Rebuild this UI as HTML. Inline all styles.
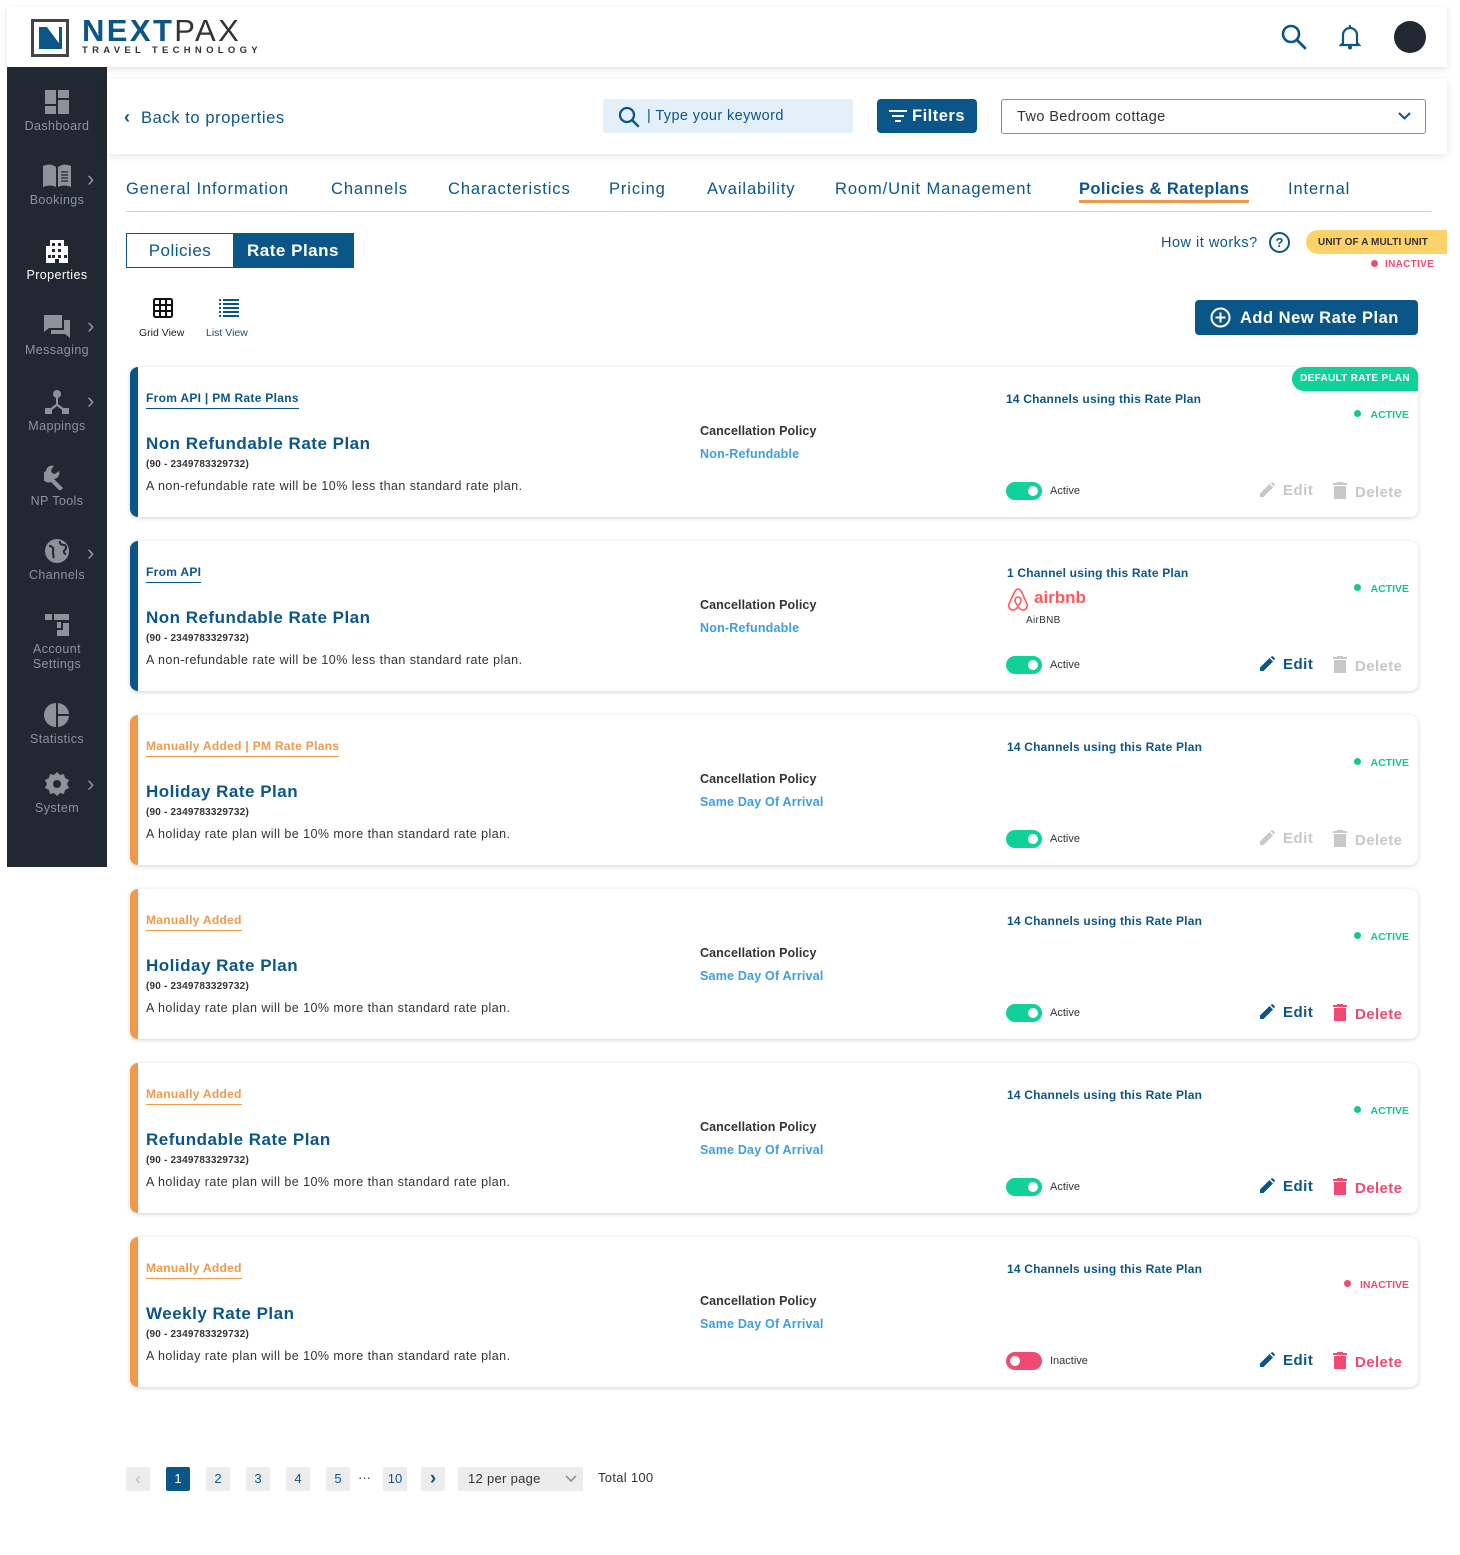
<!DOCTYPE html>
<html><head><meta charset="utf-8"><style>
*{box-sizing:border-box;margin:0;padding:0}
body{width:1460px;height:1555px;background:#fff;font-family:"Liberation Sans",sans-serif;color:#222;position:relative;overflow:hidden}
.abs{position:absolute}
.blue{color:#0b5689}
.hdr{left:7px;top:7px;width:1440px;height:60px;background:#fff;box-shadow:0 2px 6px rgba(0,0,0,.12)}
.side{left:7px;top:67px;width:100px;height:800px;background:#222831}
.si{position:absolute;left:0;width:100px;text-align:center;color:#8c939b;font-size:12.5px;letter-spacing:.4px}
.si svg{display:block;margin:0 auto 4px}
.chev{position:absolute;left:80px;color:#8c939b;font-size:22px;line-height:22px}
.sub{left:107px;top:79px;width:1340px;height:75px;background:#fff;box-shadow:0 2px 8px rgba(0,0,0,.1)}
.tab{position:absolute;top:180px;font-size:16.5px;color:#0b5689;letter-spacing:.9px}
.card{position:absolute;left:130px;width:1288px;height:150px;background:#fff;border-radius:8px;box-shadow:0 1px 4px rgba(0,0,0,.18);border-left:8px solid #0b5689}
.card.o{border-left-color:#f0994a}
.lbl{position:absolute;left:8px;top:24px;font-size:12px;font-weight:bold;color:#0b5689;padding-bottom:3px;border-bottom:1.5px solid #0b5689;letter-spacing:.3px}
.o .lbl{color:#f0994a;border-bottom-color:#f0994a}
.ttl{position:absolute;left:8px;top:67px;font-size:17px;font-weight:bold;color:#0b5689;letter-spacing:.5px}
.code{position:absolute;left:8px;top:92px;font-size:10px;font-weight:bold;color:#333;letter-spacing:.2px}
.desc{position:absolute;left:8px;top:112px;font-size:12.5px;color:#333;letter-spacing:.45px}
.cp{position:absolute;left:562px;top:57px;font-size:12.5px;font-weight:bold;color:#333;letter-spacing:.1px}
.cpv{position:absolute;left:562px;top:80px;font-size:12.5px;font-weight:bold;color:#3c9ee0;letter-spacing:.2px}
.ch{position:absolute;left:868px;top:25px;font-size:12px;font-weight:bold;color:#0b5689;letter-spacing:.2px}
.st{position:absolute;right:9px;top:42px;font-size:10.5px;font-weight:bold;color:#11c98f}
.st:before{content:"";display:inline-block;width:7px;height:7px;border-radius:50%;background:currentColor;margin-right:9px;vertical-align:1px}
.st.in{color:#ef4b72}
.tg{position:absolute;left:868px;top:115px;width:36px;height:18px;border-radius:9px;background:#11d19a}
.tg:after{content:"";position:absolute;right:4px;top:4px;width:10px;height:10px;border-radius:50%;background:#fff}
.tg.in{background:#ef4b72}.tg.in:after{right:auto;left:4px}
.tl{position:absolute;left:912px;top:118px;font-size:11px;color:#333}
.ed{position:absolute;left:1122px;top:115px;font-size:15px;font-weight:bold;color:#0b5689;letter-spacing:.5px}
.dl{position:absolute;left:1195px;top:115px;font-size:15px;font-weight:bold;color:#ef4b72;letter-spacing:.4px}
.dis{color:#c8c8c8!important}
.ed svg,.dl svg{vertical-align:-2px;margin-right:8px}
.pg{position:absolute;top:1467px;width:24px;height:24px;background:#ececec;border-radius:2px;text-align:center;line-height:24px;font-size:13px;color:#0b5689}
</style></head><body>

<div class="abs hdr">
  <svg class="abs" style="left:24px;top:12px" width="38" height="38" viewBox="0 0 38 38"><rect x="1.5" y="1.5" width="35" height="35" fill="#fff" stroke="#444" stroke-width="3"/><path d="M8 8h8l12 16V8h3v22h-7L12 14v16H8z" fill="#0b5689"/><path d="M16 8h12v16z" fill="#fff"/><path d="M8 30V8l20 22z" fill="#0b5689"/></svg>
  <div class="abs" style="left:75px;top:8px;font-size:31px;font-weight:bold;color:#0b5689;letter-spacing:2.4px;line-height:32px">NEXT<span style="font-weight:normal;color:#333">PAX</span></div>
  <div class="abs" style="left:75px;top:38px;font-size:9.5px;font-weight:bold;color:#333;letter-spacing:4.3px">TRAVEL TECHNOLOGY</div>
  <svg class="abs" style="left:1274px;top:17px" width="26" height="26" viewBox="0 0 26 26"><circle cx="10" cy="10" r="8" fill="none" stroke="#0b5689" stroke-width="2.6"/><path d="M16 16l8 8" stroke="#0b5689" stroke-width="2.8" stroke-linecap="round"/></svg>
  <svg class="abs" style="left:1332px;top:17px" width="22" height="26" viewBox="0 0 22 26"><path d="M4 19V11a7 7 0 0 1 14 0v8l2 2H2z" fill="none" stroke="#0b5689" stroke-width="2.2"/><circle cx="11" cy="23.5" r="2" fill="#0b5689"/><rect x="10" y="1" width="2" height="4" fill="#0b5689"/></svg>
  <div class="abs" style="left:1387px;top:14px;width:32px;height:32px;border-radius:50%;background:#222831"></div>
</div>

<div class="abs side">
  <div class="si" style="top:22px"><svg width="26" height="26" viewBox="0 0 26 26" fill="#8c939b"><rect x="1" y="1" width="11" height="14"/><rect x="14" y="1" width="11" height="8"/><rect x="1" y="17" width="11" height="8"/><rect x="14" y="11" width="11" height="14"/></svg>Dashboard</div>
  <div class="si" style="top:96px"><svg width="30" height="26" viewBox="0 0 30 26" fill="#8c939b"><path d="M1 3c5-2 9-2 13 1v20c-4-2-8-2-13 0z"/><path d="M16 4c4-3 8-3 13-1v21c-5-2-9-2-13 0z"/><path d="M19 9h7M19 12h7M19 15h7M19 18h7" stroke="#222831" stroke-width="1.2"/></svg>Bookings</div><div class="chev" style="top:101px">›</div>
  <div class="si" style="top:171px;color:#fff"><svg width="26" height="26" viewBox="0 0 26 26" fill="#fff"><path d="M6 2h14v6h4v17H2V8h4z"/><g fill="#222831"><rect x="8" y="5" width="3" height="3"/><rect x="14" y="5" width="3" height="3"/><rect x="8" y="11" width="3" height="3"/><rect x="14" y="11" width="3" height="3"/><rect x="4" y="17" width="3" height="3"/><rect x="20" y="17" width="3" height="3"/><rect x="8" y="17" width="3" height="3"/><rect x="14" y="17" width="3" height="3"/><rect x="11" y="21" width="4" height="4"/></g></svg>Properties</div>
  <div class="si" style="top:246px"><svg width="28" height="26" viewBox="0 0 28 26" fill="#8c939b"><path d="M1 2h18v13H6l-5 4z"/><path d="M21 7h6v18l-5-4H8v-4h13z"/></svg>Messaging</div><div class="chev" style="top:248px">›</div>
  <div class="si" style="top:322px"><svg width="26" height="26" viewBox="0 0 26 26" fill="#8c939b"><circle cx="13" cy="5" r="4"/><path d="M12 8h2v7l8 6-1.5 2L13 17l-7.5 6L4 21l8-6z"/><rect x="1" y="19" width="7" height="6"/><rect x="18" y="19" width="7" height="6"/></svg>Mappings</div><div class="chev" style="top:323px">›</div>
  <div class="si" style="top:397px"><svg width="26" height="26" viewBox="0 0 26 26" fill="#8c939b"><path d="M2 7a6 6 0 0 1 8-5l-3 4 1 3 3 1 4-3a6 6 0 0 1-5 8l9 9-3 3-9-9a6 6 0 0 1-5-11z"/></svg>NP Tools</div>
  <div class="si" style="top:471px"><svg width="26" height="26" viewBox="0 0 26 26"><circle cx="13" cy="13" r="12" fill="#8c939b"/><path d="M5 8c3 0 5 2 4 5s2 4 0 7M16 3c-1 3 2 4 4 4s3 3 1 5c-2 1-1 4 1 4" stroke="#222831" stroke-width="2" fill="none"/></svg>Channels</div><div class="chev" style="top:475px">›</div>
  <div class="si" style="top:545px;line-height:15px"><svg width="26" height="26" viewBox="0 0 26 26" fill="#8c939b"><rect x="1" y="2" width="7" height="6"/><rect x="10" y="2" width="15" height="6"/><rect x="13" y="10" width="4" height="6"/><rect x="19" y="11" width="6" height="13"/><rect x="13" y="18" width="6" height="6"/></svg>Account<br>Settings</div>
  <div class="si" style="top:635px"><svg width="26" height="26" viewBox="0 0 26 26" fill="#8c939b"><path d="M12 1a12 12 0 0 0 0 24z"/><path d="M14 1a12 12 0 0 1 11 11H14z"/><path d="M14 14h11a12 12 0 0 1-11 11z"/></svg>Statistics</div>
  <div class="si" style="top:704px"><svg width="26" height="26" viewBox="0 0 26 26"><path d="M13 1l3 3 4-1 1 4 4 2-2 4 2 4-4 2-1 4-4-1-3 3-3-3-4 1-1-4-4-2 2-4-2-4 4-2 1-4 4 1z" fill="#8c939b"/><circle cx="13" cy="13" r="4" fill="#222831"/></svg>System</div><div class="chev" style="top:706px">›</div>
</div>

<div class="abs sub">
  <div class="abs blue" style="left:17px;top:28px;font-size:16.5px;letter-spacing:.6px"><b style="font-size:18px">‹</b>&nbsp; Back to properties</div>
  <div class="abs" style="left:496px;top:20px;width:250px;height:34px;background:#e3eff9;border-radius:3px">
    <svg class="abs" style="left:15px;top:7px" width="22" height="22" viewBox="0 0 22 22"><circle cx="9" cy="9" r="7" fill="none" stroke="#0b5689" stroke-width="2.3"/><path d="M14 14l6 6" stroke="#0b5689" stroke-width="2.5" stroke-linecap="round"/></svg>
    <div class="abs blue" style="left:44px;top:9px;font-size:14.5px;letter-spacing:.4px">| Type your keyword</div>
  </div>
  <div class="abs" style="left:770px;top:20px;width:100px;height:34px;background:#0b5689;border-radius:4px;color:#fff;font-size:16.5px;font-weight:bold;line-height:35px;padding-left:35px;letter-spacing:.5px">Filters
    <svg class="abs" style="left:12px;top:11px" width="18" height="13" viewBox="0 0 18 13" fill="#fff"><rect width="18" height="2"/><rect x="3" y="5" width="12" height="2"/><rect x="6" y="10" width="6" height="2"/></svg></div>
  <div class="abs" style="left:894px;top:20px;width:425px;height:35px;border:1px solid #868e96;border-radius:3px;font-size:14.5px;color:#333;line-height:35px;padding-left:15px;letter-spacing:.4px">Two Bedroom cottage
    <svg class="abs" style="right:14px;top:12px" width="13" height="9" viewBox="0 0 13 9"><path d="M1 1l5.5 5.5L12 1" fill="none" stroke="#0b5689" stroke-width="2"/></svg></div>
</div>

<div class="tab" style="left:126px">General Information</div>
<div class="tab" style="left:331px">Channels</div>
<div class="tab" style="left:448px">Characteristics</div>
<div class="tab" style="left:609px">Pricing</div>
<div class="tab" style="left:707px">Availability</div>
<div class="tab" style="left:835px">Room/Unit Management</div>
<div class="tab" style="left:1079px;font-weight:bold;border-bottom:3px solid #f0994a;padding-bottom:1px;letter-spacing:.4px">Policies &amp; Rateplans</div>
<div class="tab" style="left:1288px">Internal</div>
<div class="abs" style="left:126px;top:211px;width:1305px;height:1px;background:#cfcfcf"></div>

<div class="abs" style="left:126px;top:233px;width:228px;height:35px;border:1.5px solid #0b5689;display:flex">
  <div style="width:106px;text-align:center;line-height:33px;font-size:17px;color:#0b5689;letter-spacing:.5px">Policies</div>
  <div style="flex:1;background:#0b5689;color:#fff;text-align:center;line-height:33px;font-size:17px;font-weight:bold;letter-spacing:.5px">Rate Plans</div>
</div>
<div class="abs blue" style="left:1161px;top:235px;font-size:14.5px;letter-spacing:.5px">How it works?</div>
<div class="abs" style="left:1269px;top:232px;width:21px;height:21px;border:2px solid #0b5689;border-radius:50%;text-align:center;font-size:13px;font-weight:bold;line-height:17px;color:#0b5689">?</div>
<div class="abs" style="left:1306px;top:230px;width:141px;height:24px;background:#fdd26b;border-radius:12px 0 0 12px;font-size:10px;font-weight:bold;color:#333;line-height:25px;padding-left:12px;letter-spacing:.1px">UNIT OF A MULTI UNIT</div>
<div class="abs" style="left:1371px;top:259px;font-size:10px;font-weight:bold;color:#ef4b72;letter-spacing:.3px"><span style="display:inline-block;width:7px;height:7px;border-radius:50%;background:#ef4b72;margin-right:7px"></span>INACTIVE</div>

<svg class="abs" style="left:153px;top:298px" width="20" height="20" viewBox="0 0 20 20"><rect x="1" y="1" width="18" height="18" rx="1.5" fill="none" stroke="#111" stroke-width="2"/><path d="M7 1v18M13 1v18M1 7h18M1 13h18" stroke="#111" stroke-width="2"/></svg>
<div class="abs" style="left:139px;top:327px;font-size:10.5px;color:#222">Grid View</div>
<svg class="abs" style="left:219px;top:298px" width="20" height="20" viewBox="0 0 20 20" fill="#0b5689"><rect x="0" y="1" width="2" height="2"/><rect x="4" y="1" width="16" height="2"/><rect x="0" y="5" width="2" height="2"/><rect x="4" y="5" width="16" height="2"/><rect x="0" y="9" width="2" height="2"/><rect x="4" y="9" width="16" height="2"/><rect x="0" y="13" width="2" height="2"/><rect x="4" y="13" width="16" height="2"/><rect x="0" y="17" width="2" height="2"/><rect x="4" y="17" width="16" height="2"/></svg>
<div class="abs blue" style="left:206px;top:327px;font-size:10.5px">List View</div>
<div class="abs" style="left:1195px;top:300px;width:223px;height:35px;background:#0b5689;border-radius:4px;color:#fff;font-size:16.5px;font-weight:bold;line-height:36px;padding-left:45px;letter-spacing:.5px">Add New Rate Plan
  <svg class="abs" style="left:15px;top:7px" width="21" height="21" viewBox="0 0 21 21"><circle cx="10.5" cy="10.5" r="9" fill="none" stroke="#fff" stroke-width="2"/><path d="M10.5 5.5v10M5.5 10.5h10" stroke="#fff" stroke-width="2"/></svg></div>

<!-- cards -->
<div class="card" style="top:367px">
  <div class="abs" style="right:0;top:0;width:126px;height:24px;background:#11d19a;border-radius:12px 8px 0 12px;color:#fff;font-size:10px;font-weight:bold;line-height:24px;text-align:center;letter-spacing:.3px">DEFAULT RATE PLAN</div>
  <div class="lbl">From API | PM Rate Plans</div><div class="ttl">Non Refundable Rate Plan</div><div class="code">(90 - 2349783329732)</div><div class="desc">A non-refundable rate will be 10% less than standard rate plan.</div>
  <div class="cp">Cancellation Policy</div><div class="cpv">Non-Refundable</div>
  <div class="ch">14 Channels using this Rate Plan</div><div class="st">ACTIVE</div>
  <div class="tg"></div><div class="tl">Active</div>
  <div class="ed dis"><svg width="15" height="15" viewBox="0 0 15 15" fill="#c8c8c8"><path d="M0 15v-3.5L9.5 2 13 5.5 3.5 15zM10.5 1l2-1L15 2.5l-1 2z"/></svg>Edit</div>
  <div class="dl dis"><svg width="14" height="17" viewBox="0 0 14 17" fill="#c8c8c8"><rect x="0" y="1" width="14" height="2"/><rect x="4" y="0" width="6" height="2"/><path d="M1 4h12v13H1z"/></svg>Delete</div>
</div>

<div class="card" style="top:541px">
  <div class="lbl">From API</div><div class="ttl">Non Refundable Rate Plan</div><div class="code">(90 - 2349783329732)</div><div class="desc">A non-refundable rate will be 10% less than standard rate plan.</div>
  <div class="cp">Cancellation Policy</div><div class="cpv">Non-Refundable</div>
  <div class="ch" style="left:869px">1 Channel using this Rate Plan</div>
  <svg class="abs" style="left:869px;top:46px" width="22" height="24" viewBox="0 0 22 24"><path d="M11 2C9 2 8 4 6 8L2 17c-1 3 1 6 4 6 2 0 3-1 5-3 2 2 3 3 5 3 3 0 5-3 4-6l-4-9c-2-4-3-6-5-6zM11 19c-2-2-3-4-3-6a3 3 0 0 1 6 0c0 2-1 4-3 6z" fill="none" stroke="#ff5a5f" stroke-width="1.6"/></svg>
  <div class="abs" style="left:896px;top:47px;font-size:17px;font-weight:bold;color:#ff5a5f">airbnb</div>
  <div class="abs" style="left:888px;top:74px;font-size:10px;color:#333;letter-spacing:.3px">AirBNB</div>
  <div class="st">ACTIVE</div>
  <div class="tg"></div><div class="tl">Active</div>
  <div class="ed"><svg width="15" height="15" viewBox="0 0 15 15" fill="#0b5689"><path d="M0 15v-3.5L9.5 2 13 5.5 3.5 15zM10.5 1l2-1L15 2.5l-1 2z"/></svg>Edit</div>
  <div class="dl dis"><svg width="14" height="17" viewBox="0 0 14 17" fill="#c8c8c8"><rect x="0" y="1" width="14" height="2"/><rect x="4" y="0" width="6" height="2"/><path d="M1 4h12v13H1z"/></svg>Delete</div>
</div>

<div class="card o" style="top:715px">
  <div class="lbl">Manually Added | PM Rate Plans</div><div class="ttl">Holiday Rate Plan</div><div class="code">(90 - 2349783329732)</div><div class="desc">A holiday rate plan will be 10% more than standard rate plan.</div>
  <div class="cp">Cancellation Policy</div><div class="cpv">Same Day Of Arrival</div>
  <div class="ch" style="left:869px">14 Channels using this Rate Plan</div><div class="st">ACTIVE</div>
  <div class="tg"></div><div class="tl">Active</div>
  <div class="ed dis"><svg width="15" height="15" viewBox="0 0 15 15" fill="#c8c8c8"><path d="M0 15v-3.5L9.5 2 13 5.5 3.5 15zM10.5 1l2-1L15 2.5l-1 2z"/></svg>Edit</div>
  <div class="dl dis"><svg width="14" height="17" viewBox="0 0 14 17" fill="#c8c8c8"><rect x="0" y="1" width="14" height="2"/><rect x="4" y="0" width="6" height="2"/><path d="M1 4h12v13H1z"/></svg>Delete</div>
</div>

<div class="card o" style="top:889px">
  <div class="lbl">Manually Added</div><div class="ttl">Holiday Rate Plan</div><div class="code">(90 - 2349783329732)</div><div class="desc">A holiday rate plan will be 10% more than standard rate plan.</div>
  <div class="cp">Cancellation Policy</div><div class="cpv">Same Day Of Arrival</div>
  <div class="ch" style="left:869px">14 Channels using this Rate Plan</div><div class="st">ACTIVE</div>
  <div class="tg"></div><div class="tl">Active</div>
  <div class="ed"><svg width="15" height="15" viewBox="0 0 15 15" fill="#0b5689"><path d="M0 15v-3.5L9.5 2 13 5.5 3.5 15zM10.5 1l2-1L15 2.5l-1 2z"/></svg>Edit</div>
  <div class="dl"><svg width="14" height="17" viewBox="0 0 14 17" fill="#ef4b72"><rect x="0" y="1" width="14" height="2"/><rect x="4" y="0" width="6" height="2"/><path d="M1 4h12v13H1z"/></svg>Delete</div>
</div>

<div class="card o" style="top:1063px">
  <div class="lbl">Manually Added</div><div class="ttl">Refundable Rate Plan</div><div class="code">(90 - 2349783329732)</div><div class="desc">A holiday rate plan will be 10% more than standard rate plan.</div>
  <div class="cp">Cancellation Policy</div><div class="cpv">Same Day Of Arrival</div>
  <div class="ch" style="left:869px">14 Channels using this Rate Plan</div><div class="st">ACTIVE</div>
  <div class="tg"></div><div class="tl">Active</div>
  <div class="ed"><svg width="15" height="15" viewBox="0 0 15 15" fill="#0b5689"><path d="M0 15v-3.5L9.5 2 13 5.5 3.5 15zM10.5 1l2-1L15 2.5l-1 2z"/></svg>Edit</div>
  <div class="dl"><svg width="14" height="17" viewBox="0 0 14 17" fill="#ef4b72"><rect x="0" y="1" width="14" height="2"/><rect x="4" y="0" width="6" height="2"/><path d="M1 4h12v13H1z"/></svg>Delete</div>
</div>

<div class="card o" style="top:1237px">
  <div class="lbl">Manually Added</div><div class="ttl">Weekly Rate Plan</div><div class="code">(90 - 2349783329732)</div><div class="desc">A holiday rate plan will be 10% more than standard rate plan.</div>
  <div class="cp">Cancellation Policy</div><div class="cpv">Same Day Of Arrival</div>
  <div class="ch" style="left:869px">14 Channels using this Rate Plan</div><div class="st in">INACTIVE</div>
  <div class="tg in"></div><div class="tl">Inactive</div>
  <div class="ed"><svg width="15" height="15" viewBox="0 0 15 15" fill="#0b5689"><path d="M0 15v-3.5L9.5 2 13 5.5 3.5 15zM10.5 1l2-1L15 2.5l-1 2z"/></svg>Edit</div>
  <div class="dl"><svg width="14" height="17" viewBox="0 0 14 17" fill="#ef4b72"><rect x="0" y="1" width="14" height="2"/><rect x="4" y="0" width="6" height="2"/><path d="M1 4h12v13H1z"/></svg>Delete</div>
</div>

<!-- pagination -->
<div class="pg" style="left:126px;color:#bbb;font-size:17px">‹</div>
<div class="pg" style="left:166px;background:#0b5689;color:#fff">1</div>
<div class="pg" style="left:206px">2</div>
<div class="pg" style="left:246px">3</div>
<div class="pg" style="left:286px">4</div>
<div class="pg" style="left:326px">5</div>
<div class="abs" style="left:358px;top:1470px;font-size:13px;color:#333">···</div>
<div class="pg" style="left:383px">10</div>
<div class="pg" style="left:421px;font-weight:bold;font-size:19px">›</div>
<div class="abs" style="left:458px;top:1467px;width:125px;height:24px;background:#ececec;border-radius:2px;font-size:13px;color:#333;line-height:24px;padding-left:10px;letter-spacing:.3px">12 per page
  <svg class="abs" style="right:6px;top:8px" width="12" height="8" viewBox="0 0 12 8"><path d="M1 1l5 5 5-5" fill="none" stroke="#8c939b" stroke-width="1.6"/></svg></div>
<div class="abs" style="left:598px;top:1470px;font-size:13px;color:#333;letter-spacing:.3px">Total 100</div>
</body></html>
